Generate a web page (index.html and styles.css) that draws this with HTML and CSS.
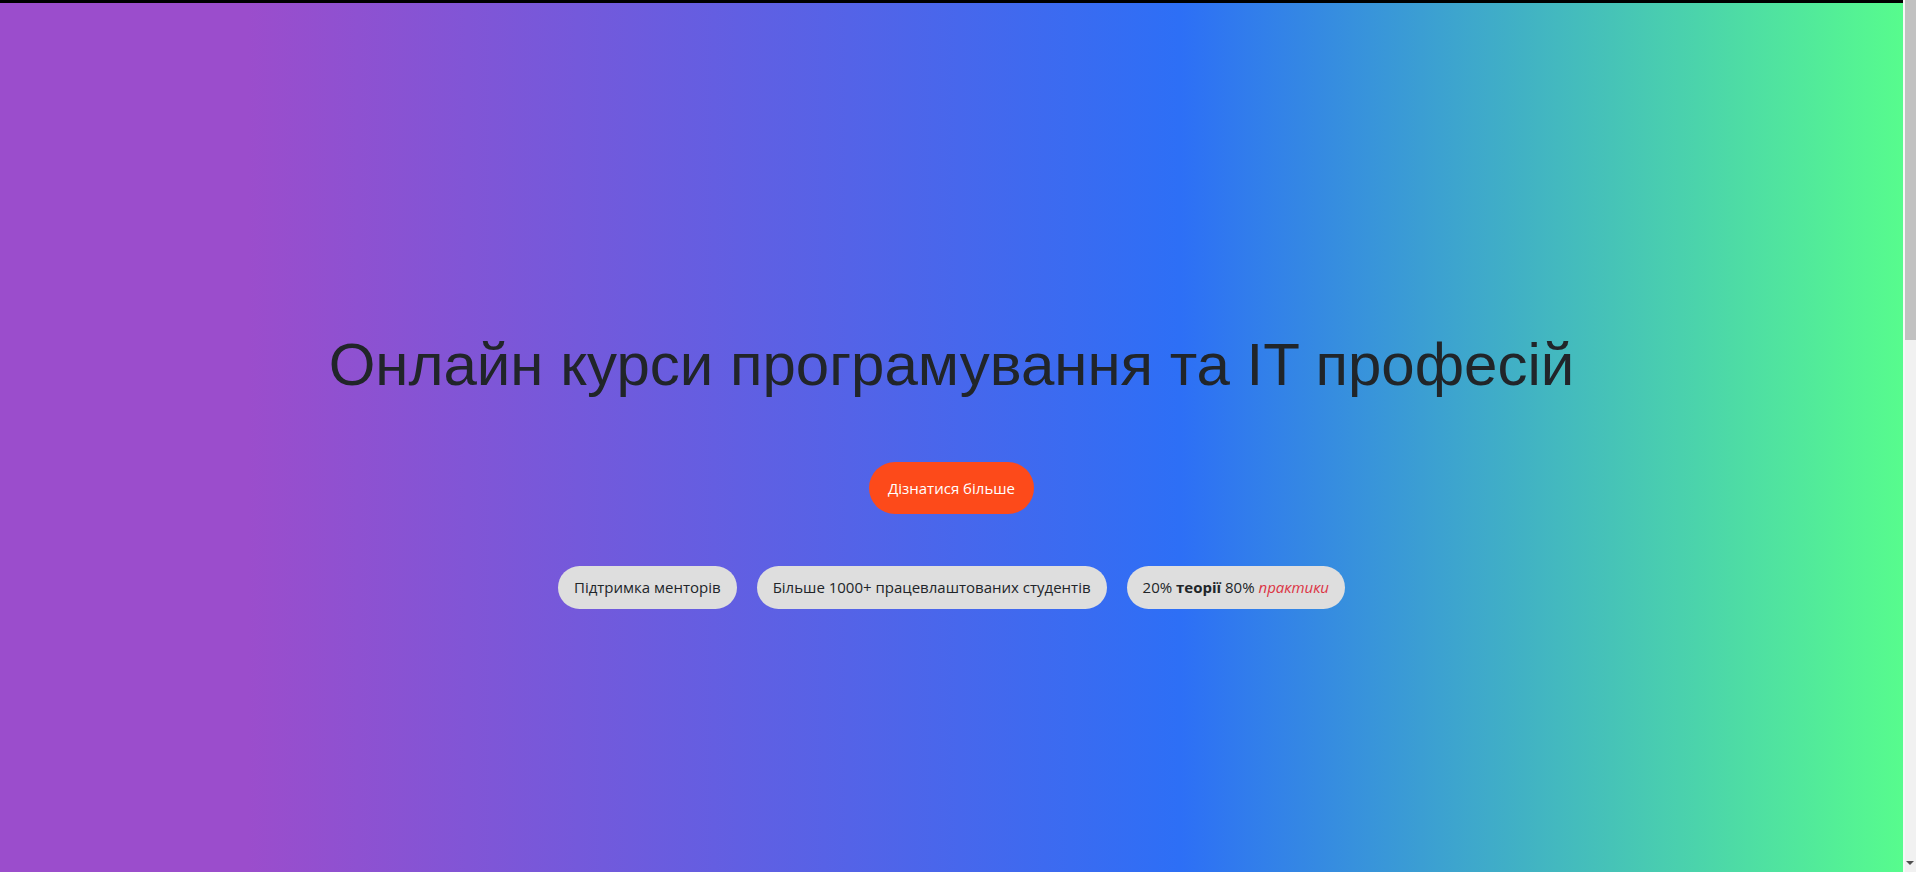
FILE: index.html
```html
<!DOCTYPE html>
<html lang="uk">
<head>
<meta charset="utf-8">
<title>Онлайн курси програмування та IT професій</title>
<link rel="stylesheet" href="styles.css">
</head>
<body>
<div class="page">
  <div class="topbar"></div>
  <section class="hero">
    <h1 class="hero-title">Онлайн курси програмування та IT професій</h1>
    <a class="hero-btn" href="#more">Дізнатися більше</a>
    <ul class="badges">
      <li class="badge">Підтримка менторів</li>
      <li class="badge">Більше 1000+ працевлаштованих студентів</li>
      <li class="badge">20% <b>теорії</b> 80% <i class="accent">практики</i></li>
    </ul>
  </section>
  <section class="more" id="more"></section>
</div>
<div class="scrollbar" aria-hidden="true">
  <div class="scrollbar-thumb"></div>
  <div class="scrollbar-arrow"></div>
</div>
</body>
</html>
```

FILE: styles.css
```css
* { box-sizing: border-box; }

html, body {
  margin: 0;
  padding: 0;
}

body {
  font-family: "Open Sans", "Noto Sans", sans-serif;
  color: #212529;
  background: #fff;
}

.page {
  margin-right: 13px;
}

.topbar {
  height: 3px;
  background: #000;
}

.hero {
  height: 869px;
  background: linear-gradient(90deg, #9b4dcc 13%, #2d6ff6 62%, #57fc8d 100%);
  display: flex;
  flex-direction: column;
  align-items: center;
  padding-top: 326px;
}

.hero-title {
  margin: 0;
  font-family: "Liberation Sans", Arial, sans-serif;
  font-weight: 400;
  font-size: 60px;
  line-height: 1.2;
  color: #212529;
}

.hero-btn {
  margin-top: 61px;
  display: inline-block;
  background: #fd4a1a;
  color: #fff;
  text-decoration: none;
  font-size: 15px;
  line-height: 24px;
  padding: 14px 19px;
  border-radius: 26px;
}

.badges {
  list-style: none;
  margin: 52px 0 0;
  padding: 0;
  display: flex;
  gap: 20px;
}

.badge {
  background: #dedede;
  border-radius: 22px;
  padding: 10px 16px;
  font-size: 15px;
  line-height: 23px;
  color: #212529;
}

.badge b { font-weight: 700; }

.accent {
  color: #dc3545;
}

.more {
  height: 1330px;
  background: #fff;
}

.scrollbar {
  position: fixed;
  top: 0;
  right: 0;
  width: 13px;
  height: 100vh;
  background: #f1f1f1;
  border-left: 2px solid #f7f7f7;
}

.scrollbar-thumb {
  height: 340px;
  background: #c1c1c1;
}

.scrollbar-arrow {
  position: absolute;
  right: 2px;
  bottom: 7px;
  width: 0;
  height: 0;
  border-left: 4px solid transparent;
  border-right: 4px solid transparent;
  border-top: 4px solid #505050;
}
```
